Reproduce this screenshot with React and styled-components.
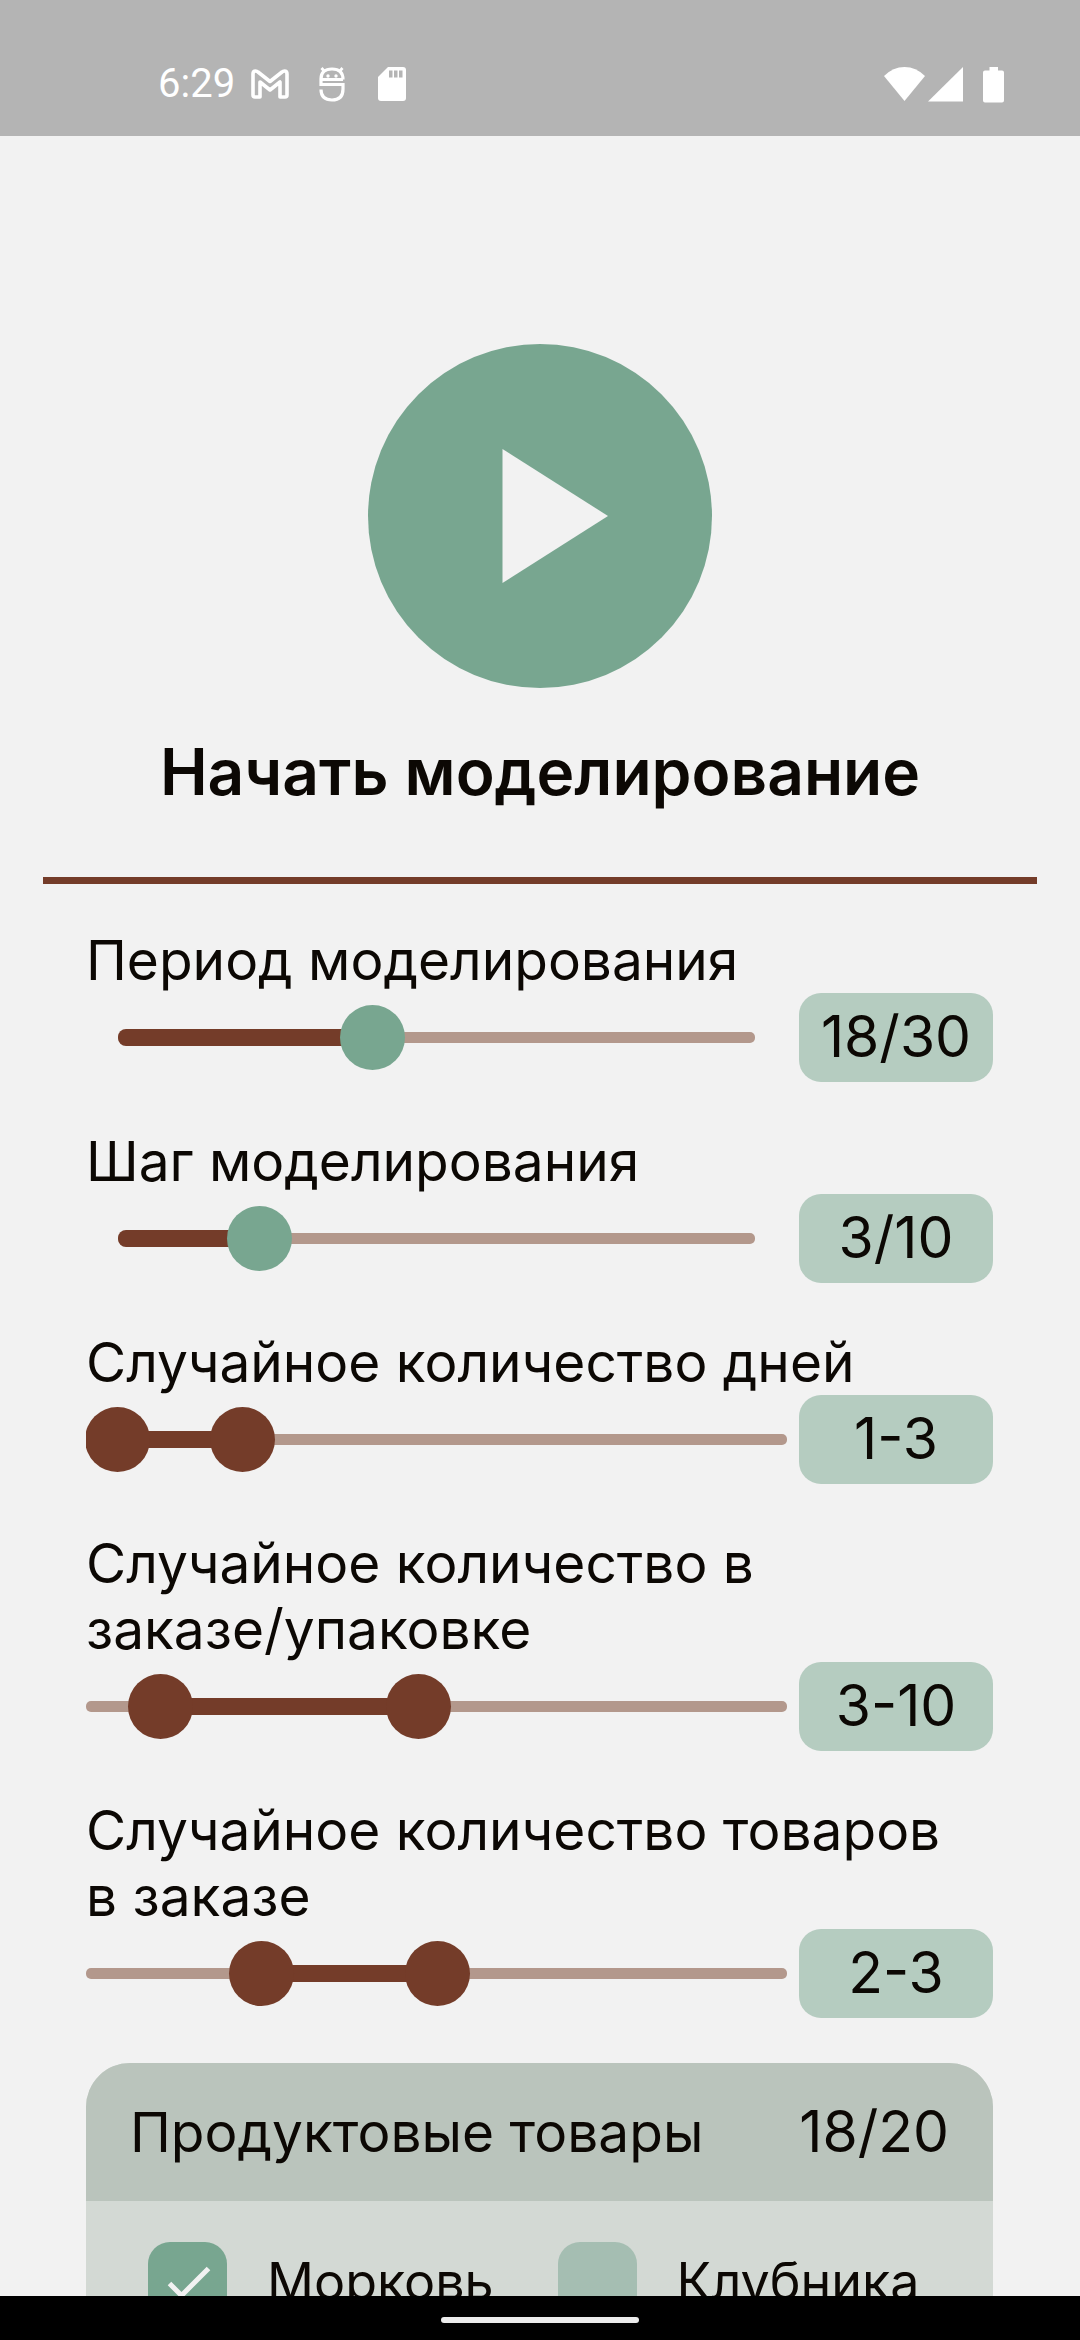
import React, { useId, useState } from 'react';
import styled, { createGlobalStyle } from 'styled-components';

const color = {
  page: '#f2f2f2',
  text: '#0c0804',
  brown: '#743c29',
  rail: '#b3988c',
  green: '#78a690',
  badge: '#b5ccc0',
  cardHead: '#bac4bc',
  cardBody: '#d3d9d4',
  unchecked: '#a5beb2',
};

const THUMB = 65;

const GlobalStyle = createGlobalStyle`
  * { box-sizing: border-box; }
  body {
    margin: 0;
    background: ${color.page};
    color: ${color.text};
    font-family: Inter, Roboto, sans-serif;
    font-size: 55px;
    line-height: 66px;
  }
`;

const Screen = styled.div`
  display: flex;
  flex-direction: column;
  height: 100vh;
`;

const StatusBar = styled.header`
  flex: none;
  display: flex;
  align-items: center;
  justify-content: space-between;
  height: 136px;
  padding: 32px 76px 0 158px;
  background: #b4b4b4;
  color: #fff;
`;

const StatusGroup = styled.div`
  display: flex;
  align-items: center;
  gap: ${(p) => p.$gap}px;
`;

const Clock = styled.time`
  font-family: Roboto, sans-serif;
  font-size: 40px;
  line-height: 44px;
`;

const Content = styled.main`
  flex: 1;
  min-height: 0;
  overflow-y: auto;
  scrollbar-width: none;
`;

const Hero = styled.section`
  display: flex;
  flex-direction: column;
  align-items: center;
  gap: 45px;
  margin: 0 43px;
  padding: 208px 0 66px;
  border-bottom: 7px solid ${color.brown};
`;

const StartButton = styled.button`
  display: grid;
  place-items: center;
  width: 344px;
  height: 344px;
  padding: 0;
  border: 0;
  border-radius: 50%;
  background: ${color.green};
  cursor: pointer;
`;

const Title = styled.h1`
  margin: 0;
  font-size: 64px;
  font-weight: 600;
  line-height: 78px;
  text-align: center;
`;

const Settings = styled.section`
  display: flex;
  flex-direction: column;
  gap: 46px;
  padding: 43px 87px 45px 86px;
`;

const Field = styled.div`
  display: flex;
  flex-direction: column;
`;

const Label = styled.label`
  display: block;
`;

const ControlRow = styled.div`
  display: flex;
  align-items: center;
  gap: 12px;
`;

const Badge = styled.output`
  flex: none;
  width: 194px;
  height: 89px;
  border-radius: 22px;
  background: ${color.badge};
  font-size: 57px;
  line-height: 88px;
  text-align: center;
`;

const Slider = styled.div`
  flex: 1;
  display: grid;
  align-items: center;
  height: 65px;
  overflow: hidden;
  & > * { grid-area: 1 / 1; }
`;

const Track = styled.div`
  display: grid;
  align-items: center;
  margin: 0 ${(p) => p.$inset}px;
  & > * { grid-area: 1 / 1; }
`;

const Rail = styled.div`
  height: 11px;
  border-radius: 5px;
  background: ${color.rail};
`;

const Fill = styled.div`
  height: 17px;
  border-radius: 8px;
  background: ${color.brown};
`;

const Knob = styled.span`
  width: ${THUMB}px;
  height: ${THUMB}px;
  border-radius: 50%;
  background: ${color.brown};
`;

const RangeInput = styled.input`
  appearance: none;
  width: 100%;
  height: ${THUMB}px;
  margin: 0;
  background: transparent;
  opacity: ${(p) => (p.$hidden ? 0 : 1)};
  pointer-events: ${(p) => (p.$hidden ? 'none' : 'auto')};
  &::-webkit-slider-thumb {
    appearance: none;
    width: ${THUMB}px;
    height: ${THUMB}px;
    border-radius: 50%;
    background: ${color.green};
    pointer-events: auto;
    cursor: pointer;
  }
  &::-moz-range-thumb {
    width: ${THUMB}px;
    height: ${THUMB}px;
    border: 0;
    border-radius: 50%;
    background: ${color.green};
    pointer-events: auto;
  }
`;

const Card = styled.section`
  margin: 0 87px 45px 86px;
  border-radius: 44px;
  background: ${color.cardBody};
  overflow: hidden;
`;

const CardHeader = styled.h2`
  display: flex;
  justify-content: space-between;
  margin: 0;
  padding: 36px 44px;
  background: ${color.cardHead};
  font-size: 55px;
  font-weight: 400;
  line-height: 66px;
`;

const Count = styled.span`
  font-size: 57px;
`;

const Products = styled.div`
  display: grid;
  grid-template-columns: 1fr 1fr;
  padding: 23px 44px;
`;

const Product = styled.label`
  display: flex;
  align-items: center;
  gap: 40px;
  padding: 18px;
  font-size: 52px;
`;

const Tick = styled.span`
  flex: none;
  display: grid;
  width: 79px;
  height: 79px;
  border-radius: 22px;
  background: ${(p) => (p.$on ? color.green : color.unchecked)};
  & > * { grid-area: 1 / 1; }
`;

const TickInput = styled.input`
  width: 100%;
  height: 100%;
  margin: 0;
  opacity: 0;
`;

const NavBar = styled.footer`
  flex: none;
  display: grid;
  place-items: center;
  height: 44px;
  padding-top: 4px;
  background: #000;
`;

const HomePill = styled.span`
  width: 198px;
  height: 6px;
  border-radius: 3px;
  background: #ececec;
`;

function SingleSetting({ label, min, max, initial }) {
  const id = useId();
  const [value, setValue] = useState(initial);
  const share = ((value - min) / (max - min)) * 100;
  return (
    <Field>
      <Label htmlFor={id}>{label}</Label>
      <ControlRow>
        <Slider>
          <Track $inset={32}>
            <Rail />
            <Fill style={{ width: `${share}%` }} />
          </Track>
          <RangeInput
            id={id}
            type="range"
            min={min}
            max={max}
            value={value}
            onChange={(e) => setValue(Number(e.target.value))}
          />
        </Slider>
        <Badge htmlFor={id}>{value}/{max}</Badge>
      </ControlRow>
    </Field>
  );
}

function RangeSetting({ label, min, max, initial }) {
  const id = useId();
  const [[low, high], setRange] = useState(initial);
  const share = (v) => ((v - min) / (max - min)) * 100;
  const knob = (v) => ({
    marginLeft: `clamp(-1px, calc(${share(v)}% - 32px), calc(100% - 64px))`,
  });
  return (
    <Field>
      <Label htmlFor={`${id}-low`}>{label}</Label>
      <ControlRow>
        <Slider>
          <Track $inset={0}>
            <Rail />
            <Fill style={{ marginLeft: `${share(low)}%`, width: `${share(high) - share(low)}%` }} />
          </Track>
          <Knob style={knob(low)} />
          <Knob style={knob(high)} />
          <RangeInput
            $hidden
            id={`${id}-low`}
            type="range"
            min={min}
            max={max}
            value={low}
            onChange={(e) => setRange([Math.min(Number(e.target.value), high), high])}
          />
          <RangeInput
            $hidden
            aria-label={label}
            type="range"
            min={min}
            max={max}
            value={high}
            onChange={(e) => setRange([low, Math.max(Number(e.target.value), low)])}
          />
        </Slider>
        <Badge>{low}-{high}</Badge>
      </ControlRow>
    </Field>
  );
}

function ProductOption({ name, initial }) {
  const [on, setOn] = useState(initial);
  return (
    <Product>
      <Tick $on={on}>
        {on && (
          <svg width="79" height="79" viewBox="0 0 79 79" fill="none" aria-hidden="true">
            <path d="M21.500 41.500L33.500 53.500L60.500 26.500" stroke="#f2f2f2" strokeWidth="5" />
          </svg>
        )}
        <TickInput type="checkbox" checked={on} onChange={(e) => setOn(e.target.checked)} />
      </Tick>
      <span>{name}</span>
    </Product>
  );
}

const MailIcon = () => (
  <svg width="38" height="30" viewBox="0 0 38 30" fill="none" stroke="#fff" strokeWidth="3.600" strokeLinejoin="round" aria-hidden="true">
    <path d="M2 5V26Q2 28 4 28H9V13L19 21L29 13V28H34Q36 28 36 26V5Q36 2 33.500 2Q32 2 31 3L19 12.500L7 3Q6 2 4.500 2Q2 2 2 5Z" />
  </svg>
);

const DroidIcon = () => (
  <svg width="26" height="36" viewBox="0 0 26 36" fill="none" stroke="#fff" strokeWidth="3.200" aria-hidden="true">
    <path d="M24 13.500Q24 3 13 3Q2 3 2 13V18.500H24V23Q24 34 13 34Q2 34 2 23.500" />
    <path d="M2 13.500H24M2.500 2L6 6M23.500 2L20 6" strokeWidth="2.800" />
    <circle cx="9" cy="10" r="1.700" fill="#fff" stroke="none" />
    <circle cx="17" cy="10" r="1.700" fill="#fff" stroke="none" />
  </svg>
);

const CardIcon = () => (
  <svg width="28" height="36" viewBox="0 0 28 36" aria-hidden="true">
    <path d="M10 1H25Q28 1 28 4V32Q28 35 25 35H3Q0 35 0 32V11Z" fill="#fff" />
    <path d="M11 4.500h3.500v7H11zM16 4.500h3.500v7H16zM21 4.500h3.500v7H21z" fill="#b4b4b4" />
  </svg>
);

const SignalIcons = () => (
  <svg width="120" height="37" viewBox="0 0 120 37" fill="#fff" aria-hidden="true">
    <path d="M0 10Q9 1 20.500 1Q32 1 41 10L20.500 35Z" />
    <path d="M79 1V35.500H44Z" />
    <path d="M105.500 1H114V4.500H118Q120 4.500 120 6.500V34.500Q120 36.500 118 36.500H101Q99 36.500 99 34.500V6.500Q99 4.500 101 4.500H105.500Z" />
  </svg>
);

export default function App() {
  return (
    <>
      <GlobalStyle />
      <Screen>
        <StatusBar>
          <StatusGroup $gap={30}>
            <StatusGroup $gap={16}>
              <Clock>6:29</Clock>
              <MailIcon />
            </StatusGroup>
            <StatusGroup $gap={33}>
              <DroidIcon />
              <CardIcon />
            </StatusGroup>
          </StatusGroup>
          <SignalIcons />
        </StatusBar>

        <Content>
          <Hero>
            <StartButton type="button" aria-label="Начать моделирование">
              <svg width="344" height="344" viewBox="0 0 344 344" aria-hidden="true">
                <path d="M134.500 105L240 172L134.500 239Z" fill={color.page} />
              </svg>
            </StartButton>
            <Title>Начать моделирование</Title>
          </Hero>

          <Settings>
            <SingleSetting label="Период моделирования" min={10} max={30} initial={18} />
            <SingleSetting label="Шаг моделирования" min={1} max={10} initial={3} />
            <RangeSetting label="Случайное количество дней" min={1} max={10} initial={[1, 3]} />
            <RangeSetting label={'Случайное количество в заказе/\u2060упаковке'} min={1} max={20} initial={[3, 10]} />
            <RangeSetting label={'Случайное количество товаров в\u00a0заказе'} min={1} max={5} initial={[2, 3]} />
          </Settings>

          <Card>
            <CardHeader>
              <span>Продуктовые товары</span>
              <Count>18/20</Count>
            </CardHeader>
            <Products>
              <ProductOption name="Морковь" initial />
              <ProductOption name="Клубника" initial={false} />
            </Products>
          </Card>
        </Content>

        <NavBar>
          <HomePill />
        </NavBar>
      </Screen>
    </>
  );
}
